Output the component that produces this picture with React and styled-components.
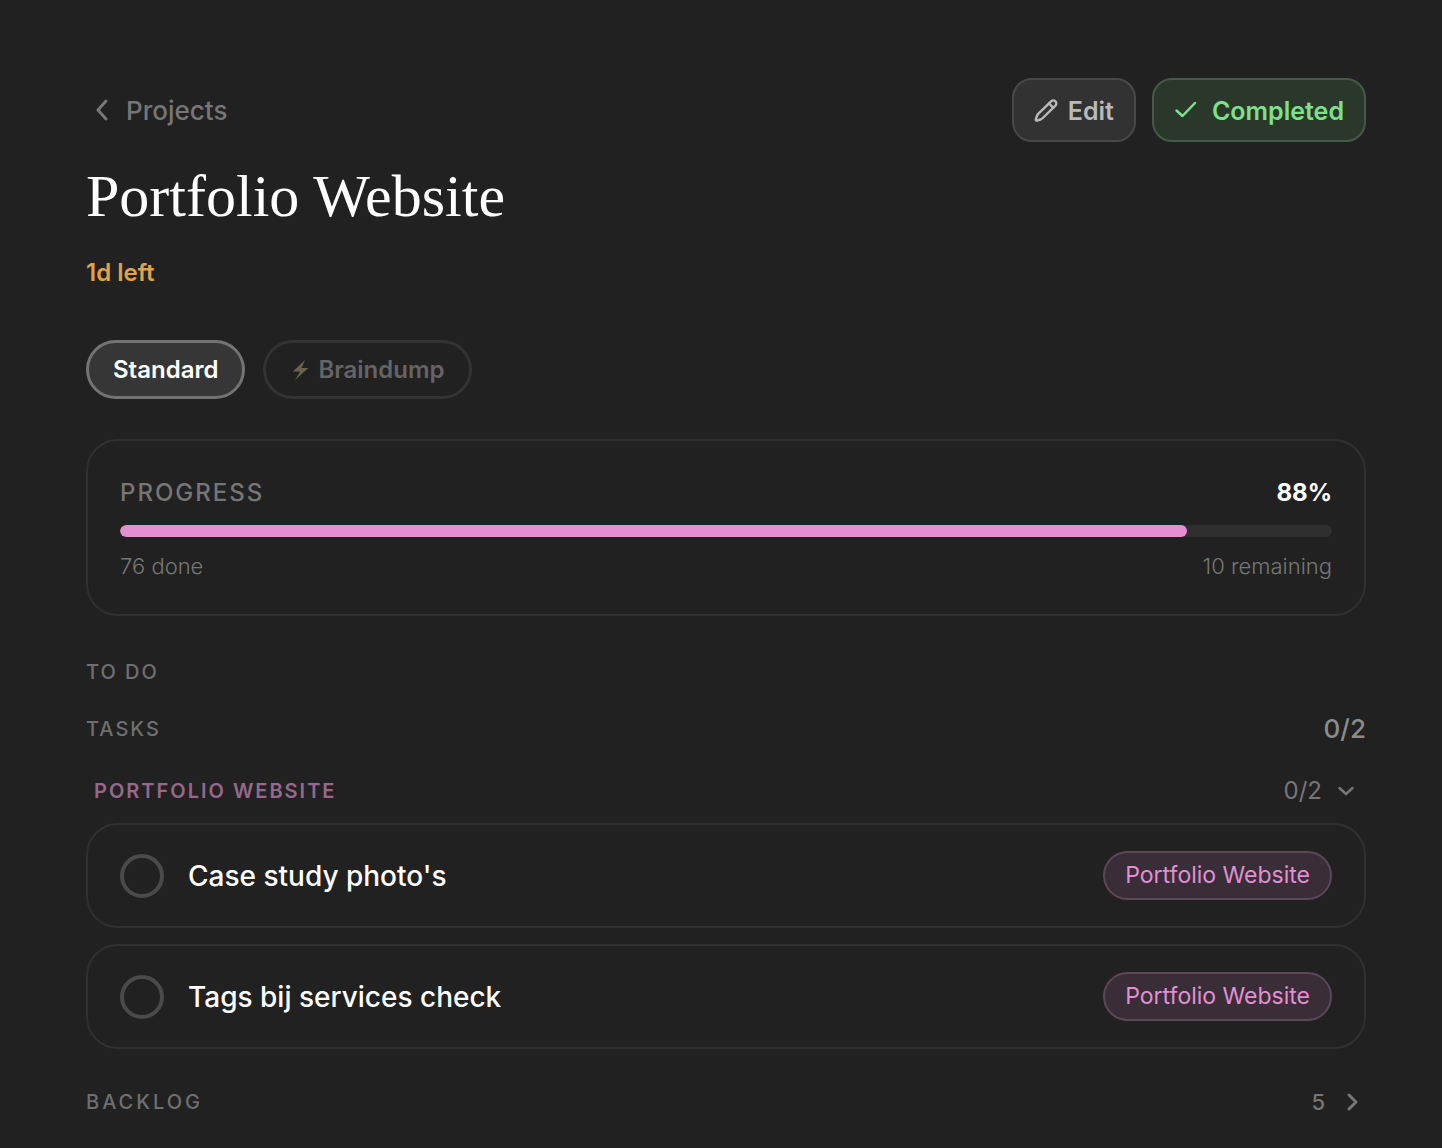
import React, { useState } from "react";
import styled, { createGlobalStyle, css } from "styled-components";

const GlobalStyle = createGlobalStyle`
  * {
    box-sizing: border-box;
  }
  body {
    margin: 0;
    background: #212121;
    color: #fff;
    font-family: Inter, "Open Sans", sans-serif;
    -webkit-font-smoothing: antialiased;
  }
  button {
    font-family: inherit;
    cursor: pointer;
  }
`;

const Page = styled.main`
  padding: 78px 76px 28px 86px;
`;

const TopBar = styled.header`
  display: flex;
  justify-content: space-between;
  align-items: center;
`;

const BackLink = styled.a`
  display: flex;
  align-items: center;
  gap: 12px;
  padding: 2px 0 0 4px;
  color: #767676;
  font-size: 26px;
  line-height: 32px;
  font-weight: 500;
  text-decoration: none;
`;

const Actions = styled.div`
  display: flex;
  gap: 16px;
`;

const ActionButton = styled.button`
  display: flex;
  align-items: center;
  gap: 10px;
  height: 64px;
  padding: 2px 20px 0;
  border: 2px solid #484848;
  border-radius: 20px;
  background: #323232;
  color: #b9b9b9;
  font-size: 25px;
  line-height: 32px;
  font-weight: 600;
  ${({ $done }) =>
    $done &&
    css`
      gap: 14px;
      border-color: #435a47;
      background: #2a382c;
      color: #7fe08a;
    `}
`;

const Title = styled.h1`
  margin: 18px 0 0;
  font-family: "Liberation Serif", serif;
  font-size: 60px;
  line-height: 72px;
  font-weight: 400;
`;

const Deadline = styled.p`
  margin: 27px 0 0;
  color: #e0a24a;
  font-size: 24px;
  line-height: 28px;
  font-weight: 600;
`;

const Modes = styled.div`
  display: flex;
  gap: 18px;
  margin-top: 53px;
`;

const ModeButton = styled.button`
  display: flex;
  align-items: center;
  gap: 6px;
  height: 59px;
  padding: 0 24px;
  border: 3px solid ${({ $active }) => ($active ? "#737373" : "#333333")};
  border-radius: 30px;
  background: ${({ $active }) => ($active ? "#363636" : "transparent")};
  color: ${({ $active }) => ($active ? "#fff" : "#646464")};
  font-size: 24px;
  line-height: 28px;
  font-weight: 600;
`;

const Card = styled.section`
  margin-top: 40px;
  padding: 36px 32px 34px;
  border: 2px solid #303030;
  border-radius: 32px;
`;

const Row = styled.div`
  display: flex;
  justify-content: space-between;
  align-items: center;
`;

const ProgressLabel = styled.h2`
  margin: 0;
  color: #767676;
  font-size: 24px;
  line-height: 32px;
  font-weight: 500;
  letter-spacing: 2px;
`;

const Percent = styled.strong`
  font-size: 24px;
  line-height: 32px;
  font-weight: 700;
`;

const Track = styled.div`
  height: 12px;
  margin: 16px 0 15px;
  border-radius: 6px;
  background: #2f2f2f;
  overflow: hidden;
`;

const Fill = styled.div`
  height: 100%;
  border-radius: 6px;
  background: #e38fd2;
`;

const Note = styled.span`
  color: #777777;
  font-size: 22px;
  line-height: 28px;
  font-weight: 300;
`;

const SectionLabel = styled.h2`
  margin: 0;
  color: #6f6f6f;
  font-size: 20px;
  line-height: 28px;
  font-weight: 500;
  letter-spacing: 2px;
`;

const TodoLabel = styled(SectionLabel)`
  margin-top: 42px;
`;

const TasksRow = styled(Row)`
  margin-top: 27px;
`;

const Total = styled.span`
  color: #8c8c8c;
  font-size: 26px;
  line-height: 32px;
  font-weight: 500;
`;

const GroupToggle = styled.button`
  display: flex;
  justify-content: space-between;
  align-items: center;
  width: 100%;
  margin-top: 30px;
  padding: 0 8px;
  border: 0;
  background: none;
  color: #767676;
`;

const GroupName = styled.span`
  color: #96688b;
  font-size: 20px;
  line-height: 32px;
  font-weight: 600;
  letter-spacing: 2px;
`;

const ToggleCount = styled.span`
  display: flex;
  align-items: center;
  gap: 12px;
  font-size: 24px;
  line-height: 32px;
  font-weight: 400;
`;

const TaskList = styled.ul`
  display: grid;
  gap: 16px;
  margin: 16px 0 0;
  padding: 0;
  list-style: none;
`;

const TaskItem = styled.li`
  display: flex;
  justify-content: space-between;
  align-items: center;
  height: 105px;
  padding: 0 32px;
  border: 2px solid #303030;
  border-radius: 32px;
`;

const TaskLabel = styled.label`
  display: flex;
  align-items: center;
  gap: 24px;
  font-size: 28px;
  line-height: 36px;
  font-weight: 500;
`;

const Check = styled.input`
  appearance: none;
  width: 44px;
  height: 44px;
  margin: 0;
  border: 4px solid #4a4a4a;
  border-radius: 50%;
  &:checked {
    background: #e38fd2;
  }
`;

const Tag = styled.span`
  padding: 8px 20px;
  border: 2px solid #5b4857;
  border-radius: 25px;
  background: #392d38;
  color: #e38fd2;
  font-size: 23px;
  line-height: 29px;
`;

const BacklogToggle = styled(GroupToggle)`
  margin-top: 37px;
  padding: 0 1px 0 0;
`;

const BacklogLabel = styled(SectionLabel)`
  letter-spacing: 3px;
`;

const BacklogCount = styled(ToggleCount)`
  gap: 16px;
  font-size: 22px;
  font-weight: 500;
`;

const Icon = ({ size, children, ...rest }) => (
  <svg
    width={size}
    height={size}
    viewBox="0 0 24 24"
    fill="none"
    stroke="currentColor"
    strokeWidth="2"
    strokeLinecap="round"
    strokeLinejoin="round"
    aria-hidden="true"
    {...rest}
  >
    {children}
  </svg>
);

const tasks = [
  { id: "photos", name: "Case study photo's" },
  { id: "tags", name: "Tags bij services check" },
];

const done = 76;
const remaining = 10;
const progress = (done / (done + remaining)) * 100;

export default function App() {
  const [mode, setMode] = useState("standard");
  return (
    <>
      <GlobalStyle />
      <Page>
        <TopBar>
          <BackLink href="#projects">
            <Icon size={24} strokeWidth="3">
              <path d="M16 2 8 11l8 9" />
            </Icon>
            Projects
          </BackLink>
          <Actions>
            <ActionButton type="button">
              <Icon size={24} strokeWidth="2.4">
                <path d="M21.4 6.6a3 3 0 0 0-4.300-4.300L4.400 14.600c-.7.700-1.200 1.600-1.500 2.500l-1.100 3.300c-.2.800.400 1.400 1.200 1.200l3.400-1.100c.9-.3 1.700-.8 2.400-1.500z" />
                <path d="m15 4.500 4.300 4.300" />
              </Icon>
              Edit
            </ActionButton>
            <ActionButton type="button" $done>
              <Icon size={24} strokeWidth="2.5">
                <path d="m2.500 11.500 6 5.500L21 4" />
              </Icon>
              Completed
            </ActionButton>
          </Actions>
        </TopBar>
        <Title>Portfolio Website</Title>
        <Deadline>1d left</Deadline>
        <Modes>
          <ModeButton
            type="button"
            $active={mode === "standard"}
            onClick={() => setMode("standard")}
          >
            Standard
          </ModeButton>
          <ModeButton
            type="button"
            $active={mode === "braindump"}
            onClick={() => setMode("braindump")}
          >
            <Icon size={22} fill="#6a644c" stroke="none">
              <path d="M16.500 1 3 13.500h8L5.500 23 20 9.800h-7.500z" />
            </Icon>
            Braindump
          </ModeButton>
        </Modes>
        <Card>
          <Row>
            <ProgressLabel>PROGRESS</ProgressLabel>
            <Percent>{Math.round(progress)}%</Percent>
          </Row>
          <Track>
            <Fill style={{ width: `${Math.round(progress)}%` }} />
          </Track>
          <Row>
            <Note>{done} done</Note>
            <Note>{remaining} remaining</Note>
          </Row>
        </Card>
        <TodoLabel>TO DO</TodoLabel>
        <TasksRow>
          <SectionLabel>TASKS</SectionLabel>
          <Total>0/2</Total>
        </TasksRow>
        <GroupToggle type="button">
          <GroupName>PORTFOLIO WEBSITE</GroupName>
          <ToggleCount>
            0/2
            <Icon size={24} strokeWidth="2.5">
              <path d="m5.500 9 6.500 6 6.500-6" />
            </Icon>
          </ToggleCount>
        </GroupToggle>
        <TaskList>
          {tasks.map(({ id, name }) => (
            <TaskItem key={id}>
              <TaskLabel htmlFor={id}>
                <Check type="checkbox" id={id} />
                {name}
              </TaskLabel>
              <Tag>Portfolio Website</Tag>
            </TaskItem>
          ))}
        </TaskList>
        <BacklogToggle type="button">
          <BacklogLabel as="span">BACKLOG</BacklogLabel>
          <BacklogCount>
            5
            <Icon size={24} strokeWidth="3">
              <path d="m8 5 7 7-7 7" />
            </Icon>
          </BacklogCount>
        </BacklogToggle>
      </Page>
    </>
  );
}
